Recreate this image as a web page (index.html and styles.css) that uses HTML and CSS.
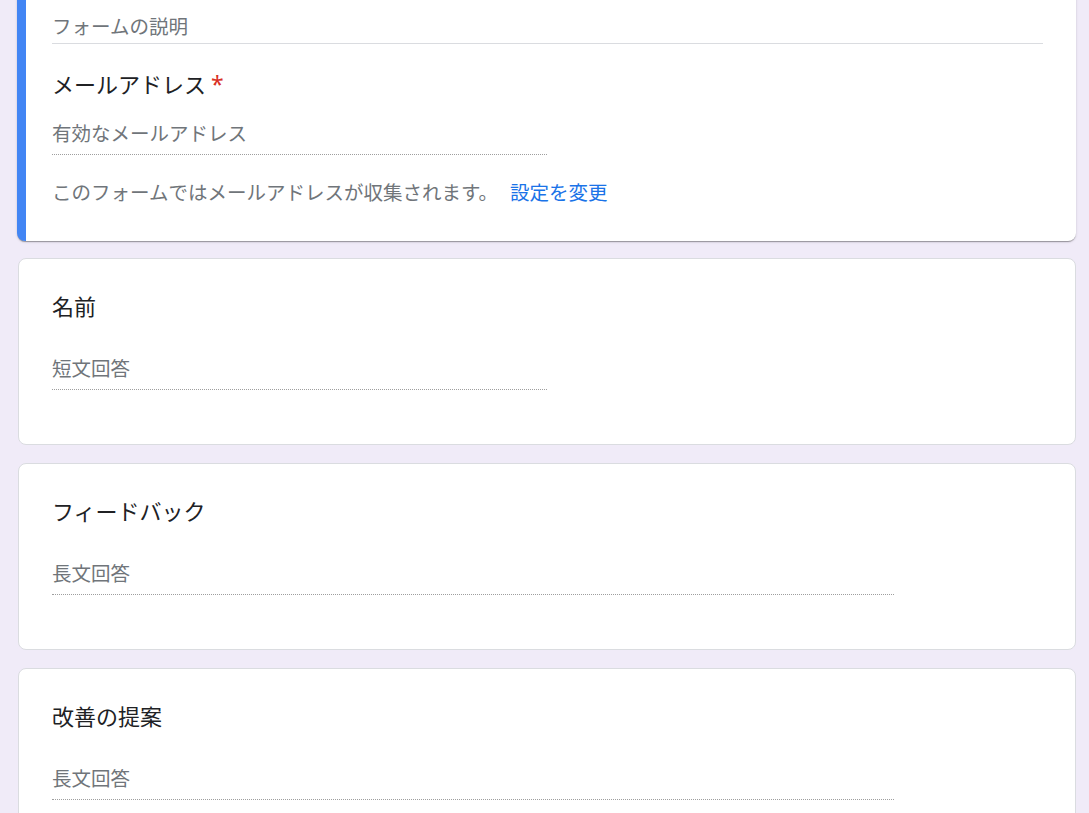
FILE: index.html
```html
<!DOCTYPE html>
<html lang="ja">
<head>
<meta charset="utf-8">
<title>フォーム</title>
<link rel="stylesheet" href="styles.css">
</head>
<body>
<main class="form">
  <section class="card card--header">
    <div class="desc">フォームの説明</div>
    <div class="q-title">メールアドレス<span class="req">*</span></div>
    <div class="answer answer--short">有効なメールアドレス</div>
    <div class="note">このフォームではメールアドレスが収集されます。<a class="link">設定を変更</a></div>
  </section>
  <section class="card">
    <div class="q-title">名前</div>
    <div class="answer answer--short answer--q">短文回答</div>
  </section>
  <section class="card">
    <div class="q-title">フィードバック</div>
    <div class="answer answer--long answer--q">長文回答</div>
  </section>
  <section class="card">
    <div class="q-title">改善の提案</div>
    <div class="answer answer--long answer--q">長文回答</div>
  </section>
</main>
</body>
</html>
```
FILE: styles.css
```css
html, body {
  margin: 0;
  padding: 0;
}
body {
  background: #f0ebf8;
  font-family: "Noto Sans CJK JP", "Noto Sans", sans-serif;
  overflow: hidden;
}
.form {
  display: flex;
  flex-direction: column;
  align-items: flex-start;
  padding-left: 18px;
}
.card {
  box-sizing: border-box;
  width: 1058px;
  background: #fff;
  border: 1px solid #dadce0;
  border-radius: 8px;
  padding: 30px 32px 54px 33px;
  margin-bottom: 18px;
}
.card--header {
  width: 1059px;
  margin-left: -1px;
  margin-top: -20px;
  margin-bottom: 17px;
  border: none;
  border-left: 9px solid #4285f4;
  padding: 32px 33px 35px 26px;
  box-shadow: 0 2px 1px -1px rgba(0,0,0,.2), 0 1px 1px 0 rgba(0,0,0,.14), 0 1px 3px 0 rgba(0,0,0,.12);
}
.desc {
  font-size: 19.5px;
  line-height: 28px;
  color: #70757a;
  padding-bottom: 3px;
  border-bottom: 1px solid #dadce0;
}
.q-title {
  font-size: 22px;
  line-height: 32px;
  color: #202124;
}
.card--header .q-title {
  margin-top: 23px;
}
.req {
  color: #d93025;
  padding-left: 5px;
  font-family: "Noto Sans", sans-serif;
  font-size: 23px;
  line-height: 0;
  vertical-align: baseline;
}
.answer {
  font-size: 19.5px;
  line-height: 28px;
  color: #70757a;
  padding-bottom: 7px;
  border-bottom: 1px dotted rgba(0,0,0,.38);
  margin-top: 20px;
}
.answer--q {
  margin-top: 33px;
}
.answer--short {
  width: 495px;
}
.answer--long {
  width: 842px;
}
.note {
  margin-top: 23px;
  font-size: 19.5px;
  line-height: 28px;
  color: #70757a;
}
.link {
  color: #1a73e8;
  margin-left: 12px;
  cursor: pointer;
}
```
